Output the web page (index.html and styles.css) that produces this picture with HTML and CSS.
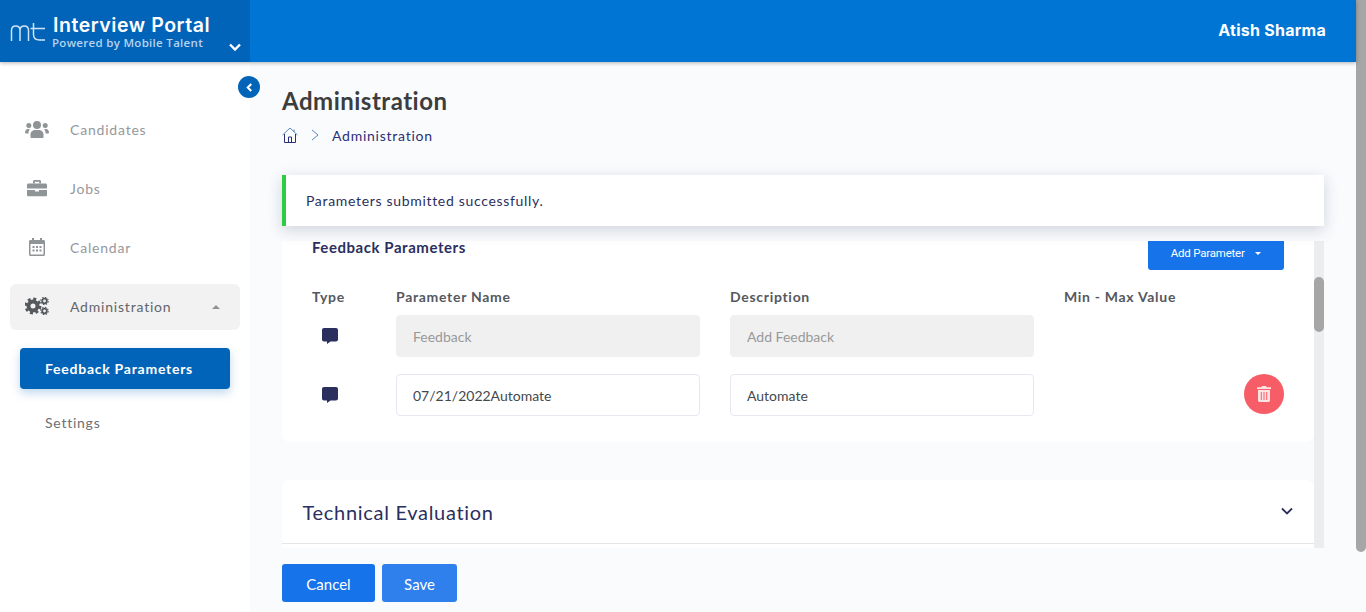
FILE: index.html
```html
<!DOCTYPE html>
<html lang="en">
<head>
    <meta charset="UTF-8">
    <title>Interview Portal</title>
    <link rel="stylesheet" href="styles.css">
</head>
<body>
    <div class="page">
        <div class="app">
            <header class="topbar">
                <div class="brand">
                    <svg class="brand-logo" viewBox="0 0 36 19" width="36" height="19" fill="none" stroke="#cfe3f5" stroke-width="1.500">
                        <path d="M1.500 18V7.500C1.500 4.500 3.500 3 5.800 3S10 4.500 10 7.500V18M10 7.500C10 4.500 12 3 14.300 3s4.200 1.500 4.200 4.500V18"/>
                        <path d="M23.500 0v11.500c0 3.500 2.500 5.500 6 5.500H35M20.500 5.500h14.500"/>
                    </svg>
                    <div class="brand-text">
                        <div class="brand-name">Interview Portal</div>
                        <div class="brand-sub">Powered by Mobile Talent</div>
                    </div>
                    <svg class="brand-caret" viewBox="0 0 12 8" width="12" height="8" fill="none" stroke="#fff" stroke-width="2.400">
                        <path d="M1 1.500l5 5 5-5"/>
                    </svg>
                </div>
                <div class="user-name">Atish Sharma</div>
            </header>

            <div class="body-row">
                <nav class="sidebar">
                    <button class="collapse-btn">
                        <svg viewBox="0 0 8 10" width="7" height="9" fill="none" stroke="#fff" stroke-width="2.400"><path d="M6 1L2 5l4 4"/></svg>
                    </button>
                    <a class="nav-item">
                        <svg class="nav-icon" viewBox="0 0 24 18" width="24" height="18" fill="#8f9496">
                            <circle cx="12" cy="5" r="4"/><circle cx="3.800" cy="5.500" r="2.500"/><circle cx="20.200" cy="5.500" r="2.500"/>
                            <path d="M5.500 17v-2.500C5.500 11.500 8 10 10 10h4c2 0 4.500 1.500 4.500 4.500V17c0 .5-.5 1-1 1h-11c-.5 0-1-.5-1-1z"/>
                            <path d="M0 13c0-2 1-4 3-4h2c-1 1-1.500 2-1.500 4.500H1c-.5 0-1-.2-1-.5zM24 13c0-2-1-4-3-4h-2c1 1 1.500 2 1.500 4.500H23c.5 0 1-.2 1-.5z"/>
                        </svg>
                        <span>Candidates</span>
                    </a>
                    <a class="nav-item">
                        <svg class="nav-icon" viewBox="0 0 20 17" width="20" height="17" fill="#8f9496">
                            <path d="M6 4V2c0-1 .7-1.500 1.500-1.500h5C13.300.5 14 1 14 2v2h-1.800V2.300H7.800V4z"/>
                            <path d="M1.500 4h17c.8 0 1.500.7 1.500 1.500V9H0V5.500C0 4.700.7 4 1.500 4zM0 10.500h8V12h4v-1.500h8v5c0 .8-.7 1.500-1.500 1.500h-17C.7 17 0 16.300 0 15.500z"/>
                        </svg>
                        <span>Jobs</span>
                    </a>
                    <a class="nav-item">
                        <svg class="nav-icon" viewBox="0 0 16 18" width="16" height="18" fill="#8f9496">
                            <path fill-rule="evenodd" d="M3 0h2v2h6V0h2v2h1.500c.8 0 1.500.7 1.500 1.500v13c0 .8-.7 1.500-1.500 1.500h-13C.7 18 0 17.300 0 16.500v-13C0 2.700.7 2 1.500 2H3zM1.500 6v10.500h13V6z"/>
                            <path d="M3.500 8h2v2h-2zM7 8h2v2H7zM10.500 8h2v2h-2zM3.500 11.500h2v2h-2zM7 11.500h2v2H7zM10.500 11.500h2v2h-2z"/>
                        </svg>
                        <span>Calendar</span>
                    </a>
                    <a class="nav-item nav-item-open">
                        <svg class="nav-icon" viewBox="0 0 24 18" width="24" height="18" fill="none" stroke="#55595c">
                            <circle cx="8" cy="9" r="4.500" stroke-width="4"/>
                            <circle cx="8" cy="9" r="7.200" stroke-width="2.600" stroke-dasharray="3 2.660"/>
                            <circle cx="19.500" cy="4" r="2.300" stroke-width="1.800"/>
                            <circle cx="19.500" cy="4" r="3.700" stroke-width="1.100" stroke-dasharray="1.500 1.400"/>
                            <circle cx="19.500" cy="14" r="2.300" stroke-width="1.800"/>
                            <circle cx="19.500" cy="14" r="3.700" stroke-width="1.100" stroke-dasharray="1.500 1.400"/>
                        </svg>
                        <span>Administration</span>
                        <i class="caret-up"></i>
                    </a>
                    <a class="sub-item sub-item-active">Feedback Parameters</a>
                    <a class="sub-item">Settings</a>
                </nav>

                <main class="main">
                    <h1 class="page-title">Administration</h1>
                    <div class="crumbs">
                        <svg viewBox="0 0 16 16" width="16" height="16" fill="none" stroke-width="1">
                            <path d="M.5 8L8 1l7.500 7" stroke="#5b86c0"/>
                            <path d="M2.500 7v8.500h11V7" stroke="#2b2f77"/>
                            <path d="M6.500 15.500V10h3v5.500" stroke="#2b2f77"/>
                            <path d="M12 2.500v2.500" stroke="#5b86c0"/>
                        </svg>
                        <svg viewBox="0 0 8 12" width="8" height="12" fill="none" stroke="#5b86c0"><path d="M1 1l6 5-6 5"/></svg>
                        <span>Administration</span>
                    </div>

                    <div class="alert">Parameters submitted successfully.</div>

                    <div class="panel">
                        <div class="panel-view">
                            <section class="card">
                                <div class="card-head">
                                    <h3>Feedback Parameters</h3>
                                    <button class="btn-add">Add Parameter <i class="caret-down"></i></button>
                                </div>
                                <div class="param-grid param-heads">
                                    <span>Type</span>
                                    <span>Parameter Name</span>
                                    <span>Description</span>
                                    <span>Min - Max Value</span>
                                </div>
                                <div class="param-grid">
                                    <svg class="comment" viewBox="0 0 16 16" width="16" height="16" fill="#2b2f5e"><path d="M2 0h12c1.100 0 2 .9 2 2v9.500c0 1.100-.9 2-2 2H8.500L5 16v-2.500H2c-1.100 0-2-.9-2-2V2C0 .9.900 0 2 0z"/></svg>
                                    <input class="field" value="Feedback" disabled>
                                    <input class="field" value="Add Feedback" disabled>
                                    <span></span>
                                </div>
                                <div class="param-grid">
                                    <svg class="comment" viewBox="0 0 16 16" width="16" height="16" fill="#2b2f5e"><path d="M2 0h12c1.100 0 2 .9 2 2v9.500c0 1.100-.9 2-2 2H8.500L5 16v-2.500H2c-1.100 0-2-.9-2-2V2C0 .9.900 0 2 0z"/></svg>
                                    <input class="field" value="07/21/2022Automate">
                                    <input class="field" value="Automate">
                                    <button class="btn-delete">
                                        <svg viewBox="0 0 14 16" width="14" height="16" fill="#fde3e4">
                                            <path d="M5 0h4l.7 1.200H14v1.800H0V1.200h4.300z"/>
                                            <path fill-rule="evenodd" d="M1 4h12v10.500c0 .8-.7 1.500-1.500 1.500h-9C1.700 16 1 15.300 1 14.500zM3.800 6v8h1V6zM6.500 6v8h1V6zM9.200 6v8h1V6z"/>
                                        </svg>
                                    </button>
                                </div>
                            </section>

                            <section class="card accordion">
                                <h2>Technical Evaluation</h2>
                                <svg viewBox="0 0 12 8" width="12" height="8" fill="none" stroke="#2b2f5e" stroke-width="1.800"><path d="M1 1.500l5 5 5-5"/></svg>
                            </section>
                        </div>
                        <div class="scroll-track"><div class="scroll-thumb"></div></div>
                    </div>

                    <div class="actions">
                        <button class="btn btn-cancel">Cancel</button>
                        <button class="btn btn-save">Save</button>
                    </div>
                </main>
            </div>
        </div>
        <div class="page-scroll"><div class="page-thumb"></div></div>
    </div>
</body>
</html>
```
FILE: styles.css
```css
* {
    box-sizing: border-box;
}
html, body {
    margin: 0;
    height: 612px;
    overflow: hidden;
}
body {
    font-family: 'Lato', 'Liberation Sans', sans-serif;
    background-color: #f9fbfd;
    color: #2b2f5e;
}
.page {
    display: flex;
    height: 612px;
}
.app {
    flex: 1;
    display: flex;
    flex-direction: column;
    min-width: 0;
}
.page-scroll {
    width: 10px;
    background: #f9fbfd;
}
.page-thumb {
    height: 552px;
    background: #a6a6a6;
    border-radius: 0 0 5px 5px;
}

/* top bar */
.topbar {
    height: 62px;
    flex: none;
    display: flex;
    align-items: center;
    justify-content: space-between;
    background: #0075d4;
    box-shadow: 0 1px 4px rgba(0, 0, 0, 0.3);
    position: relative;
    z-index: 2;
}
.brand {
    width: 250px;
    height: 62px;
    background: #0264b9;
    display: flex;
    align-items: center;
    padding-left: 10px;
    position: relative;
}
.brand-logo {
    margin-top: 3px;
}
.brand-text {
    margin-left: 7px;
}
.brand-name {
    font-family: 'Inter', sans-serif;
    font-size: 19.5px;
    font-weight: 600;
    color: #fff;
    line-height: 24px;
    letter-spacing: 0.55px;
}
.brand-sub {
    font-family: 'Open Sans', sans-serif;
    font-size: 11.5px;
    font-weight: 600;
    color: #b5d3ee;
    line-height: 13px;
    letter-spacing: 0.3px;
    margin: -1px 0 1px -1px;
}
.brand-caret {
    position: absolute;
    left: 229px;
    top: 43px;
}
.user-name {
    font-family: 'Inter', sans-serif;
    font-size: 16px;
    font-weight: 700;
    color: #fff;
    padding-right: 30px;
    padding-bottom: 2px;
    letter-spacing: 0.25px;
}

/* sidebar */
.body-row {
    flex: 1;
    display: flex;
    min-height: 0;
}
.sidebar {
    width: 250px;
    flex: none;
    background: #fff;
    padding: 45px 10px 0;
    display: flex;
    flex-direction: column;
    position: relative;
}
.collapse-btn {
    position: absolute;
    left: 238px;
    top: 14px;
    width: 22px;
    height: 22px;
    padding: 0;
    border: none;
    border-radius: 50%;
    background: #0264b9;
    display: flex;
    align-items: center;
    justify-content: center;
    box-shadow: 0 0 0 1px rgba(255, 255, 255, 0.8);
    z-index: 1;
}
.nav-item {
    height: 46px;
    margin-bottom: 13px;
    display: flex;
    align-items: center;
    position: relative;
    padding: 0 0 2px 60px;
    font-size: 14px;
    letter-spacing: 0.8px;
    color: #95999c;
    border-radius: 6px;
}
.nav-icon {
    position: absolute;
    left: 27px;
    top: calc(50% - 1px);
    transform: translate(-50%, -50%);
}
.nav-item-open {
    background: #f2f2f3;
    color: #62666a;
    margin-bottom: 18px;
}
.caret-up {
    position: absolute;
    left: 202px;
    top: 21px;
    border-left: 4.500px solid transparent;
    border-right: 4.500px solid transparent;
    border-bottom: 4.500px solid #8f9496;
}
.sub-item {
    display: block;
    margin-left: 10px;
    width: 210px;
    height: 41px;
    line-height: 41px;
    padding-left: 25px;
    font-size: 14px;
    letter-spacing: 0.75px;
    color: #6c7074;
    border-radius: 4px;
    margin-bottom: 13px;
}
.sub-item-active {
    background: #0264b9;
    color: #fff;
    font-weight: 700;
    box-shadow: 0 4px 10px rgba(2, 100, 185, 0.25);
}

/* main */
.main {
    flex: 1;
    min-width: 0;
    padding: 0 32px;
    display: flex;
    flex-direction: column;
}
.page-title {
    margin: 25px 0 0;
    font-size: 24px;
    line-height: 28px;
    font-weight: 700;
    letter-spacing: 0.5px;
    color: #3d3d3d;
}
.crumbs {
    margin-top: 10px;
    height: 20px;
    display: flex;
    align-items: center;
    font-size: 14px;
    letter-spacing: 0.75px;
    color: #2b2f77;
}
.crumbs svg:nth-child(2) {
    margin: 0 13px 0 13px;
}
.alert {
    margin-top: 30px;
    height: 51px;
    line-height: 51px;
    background: #fff;
    border-left: 4px solid #2ecc40;
    padding-left: 20px;
    font-size: 14px;
    letter-spacing: 0.68px;
    box-shadow: 0 4px 14px rgba(40, 50, 80, 0.2);
    position: relative;
    z-index: 1;
}
.panel {
    margin-top: 15px;
    height: 307px;
    flex: none;
    display: flex;
}
.panel-view {
    flex: 1;
    min-width: 0;
    overflow: hidden;
}
.scroll-track {
    width: 10px;
    background: #ecedef;
}
.scroll-thumb {
    margin-top: 36px;
    height: 55px;
    background: #a6a6a6;
    border-radius: 5px;
}
.card {
    background: #fff;
    border-radius: 8px;
}
.card:first-child {
    margin-top: -9px;
    height: 210px;
    padding: 0 30px;
}
.card-head {
    display: flex;
    justify-content: space-between;
    height: 38px;
}
.card-head h3 {
    margin: 5px 0 0;
    font-size: 15px;
    line-height: 20px;
    letter-spacing: 0.55px;
    font-weight: 700;
    color: #2b2f5e;
}
.btn-add {
    width: 136px;
    height: 38px;
    border: none;
    border-radius: 3px;
    background: #1673ea;
    color: #fff;
    font-family: 'Roboto', sans-serif;
    font-size: 11.500px;
    padding: 4px 0 0;
    letter-spacing: -0.2px;
}
.caret-down {
    display: inline-block;
    margin-left: 8px;
    vertical-align: middle;
    border-left: 3.500px solid transparent;
    border-right: 3.500px solid transparent;
    border-top: 3.500px solid #fff;
}
.param-grid {
    display: grid;
    grid-template-columns: 54px 304px 304px 1fr;
    column-gap: 30px;
    align-items: center;
    margin-bottom: 17px;
}
.param-heads {
    margin: 18px 0 9px;
    line-height: 18px;
    font-size: 14px;
    font-weight: 700;
    letter-spacing: 0.7px;
    color: #55595e;
}
.comment {
    margin-left: 10px;
}
.field {
    width: 304px;
    height: 42px;
    padding: 0 16px;
    border: 1px solid #e6e7f0;
    border-radius: 4px;
    background: #fff;
    font-family: 'Lato', sans-serif;
    font-size: 14px;
    color: #44484c;
}
.field:disabled {
    background: #f0f0f0;
    border-color: #f0f0f0;
    color: #999;
}
.btn-delete {
    justify-self: end;
    width: 40px;
    height: 40px;
    margin-top: -2px;
    padding: 0;
    border: none;
    border-radius: 50%;
    background: #f75d66;
    display: flex;
    align-items: center;
    justify-content: center;
}
.card.accordion {
    margin-top: 38px;
    height: 80px;
    padding: 0 21px 0 20.500px;
    display: flex;
    align-items: flex-start;
    justify-content: space-between;
    border-radius: 8px 8px 0 0;
    position: relative;
}
.accordion::after {
    content: "";
    position: absolute;
    left: 0;
    right: 0;
    top: 63px;
    height: 1px;
    background: #e6e6e8;
}
.accordion h2 {
    margin: 19px 0 0;
    font-size: 20px;
    line-height: 26px;
    font-weight: 400;
    letter-spacing: 0.7px;
    color: #2b2f5e;
}
.accordion svg {
    margin-top: 27px;
}
.actions {
    margin-top: 16px;
    display: flex;
    gap: 7px;
}
.btn {
    height: 38px;
    border: none;
    border-radius: 3px;
    color: #fff;
    font-family: 'Lato', sans-serif;
    font-size: 15px;
    padding: 2px 0 0;
}
.btn-cancel {
    width: 93px;
    background: #1673ea;
}
.btn-save {
    width: 75px;
    background: #2f80ec;
}
```
